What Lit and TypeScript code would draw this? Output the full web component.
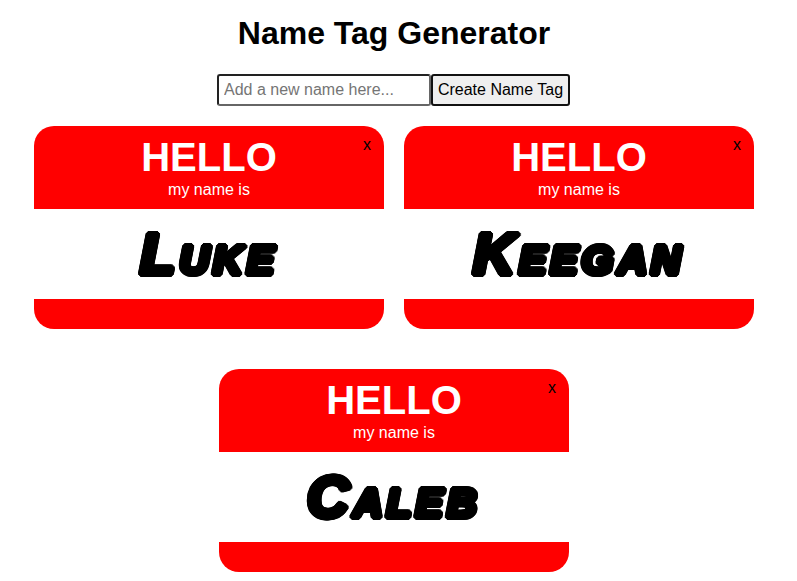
import { LitElement, html, css } from "lit";
import { customElement, state } from "lit/decorators.js";

@customElement("app-root")
export class AppRoot extends LitElement {
  @state() names = ["Luke", "Keegan", "Caleb"];
  @state() draft = "";

  static styles = css`
    :host { display: block; padding-right: 9px; font-family: "Liberation Sans", Arial, sans-serif; color: #000; text-align: center; }
    h1 { margin: 0; padding-top: 15px; font-size: 32px; line-height: 37px; font-weight: 700; }
    form { display: flex; justify-content: center; margin-top: 22px; height: 32px; padding-right: 1px; }
    input, button { box-sizing: border-box; height: 32px; font: 16px "Liberation Sans", Arial, sans-serif; margin: 0; }
    input { width: 214px; padding: 1px 5px; border: 2px solid; border-color: #222 #666 #666 #222; border-radius: 3px; background: #fff; }
    input::placeholder { color: #757575; }
    button { width: 139px; padding: 1px 0; white-space: nowrap; border: 2px solid #111; border-radius: 3px; background: #efefef; color: #000; }
    .tags { display: flex; flex-wrap: wrap; justify-content: center; padding-top: 20px; gap: 40px 20px; }
    .tag { position: relative; width: 350px; border-radius: 20px; overflow: hidden; background: #f00; }
    .head { height: 83px; color: #fff; display: flex; flex-direction: column; align-items: center; }
    .hello { font-size: 40px; line-height: 46px; font-weight: 700; margin-top: 8px; }
    .sub { font-size: 16px; line-height: 18px; margin-top: 1px; }
    .body { height: 90px; background: #fff; display: flex; align-items: center; justify-content: center; }
    .name {
      display: inline-block; will-change: transform;
      font-family: "Liberation Sans", Arial, sans-serif; font-weight: 700; font-style: italic; font-variant: small-caps;
      font-size: 58px; line-height: 90px; letter-spacing: 4px; white-space: nowrap; color: #000;
      text-shadow: 3px 0 0 #000, -3px 0 0 #000, 0 3px 0 #000, 0 -3px 0 #000,
        2px 2px 0 #000, -2px 2px 0 #000, 2px -2px 0 #000, -2px -2px 0 #000,
        1px 3px 0 #000, -1px 3px 0 #000, 1px -3px 0 #000, -1px -3px 0 #000,
        3px 1px 0 #000, -3px 1px 0 #000, 3px -1px 0 #000, -3px -1px 0 #000;
    }
    .foot { height: 30px; }
    .close { position: absolute; top: 10px; right: 13px; padding: 0; border: 0; width: auto; height: auto; background: none; font: 16px/18px "Liberation Sans", Arial, sans-serif; cursor: pointer; }
  `;

  private add(e: Event) {
    e.preventDefault();
    const v = this.draft.trim();
    if (v) { this.names = [...this.names, v]; this.draft = ""; }
  }

  render() {
    return html`
      <h1>Name Tag Generator</h1>
      <form @submit=${this.add}>
        <input placeholder="Add a new name here..." .value=${this.draft}
          @input=${(e: Event) => (this.draft = (e.target as HTMLInputElement).value)} />
        <button type="submit">Create Name Tag</button>
      </form>
      <div class="tags">
        ${this.names.map((n, i) => html`
          <div class="tag">
            <button class="close" @click=${() => (this.names = this.names.filter((_, j) => j !== i))}>x</button>
            <div class="head"><div class="hello">HELLO</div><div class="sub">my name is</div></div>
            <div class="body"><span class="name">${n}</span></div>
            <div class="foot"></div>
          </div>`)}
      </div>
    `;
  }
}
